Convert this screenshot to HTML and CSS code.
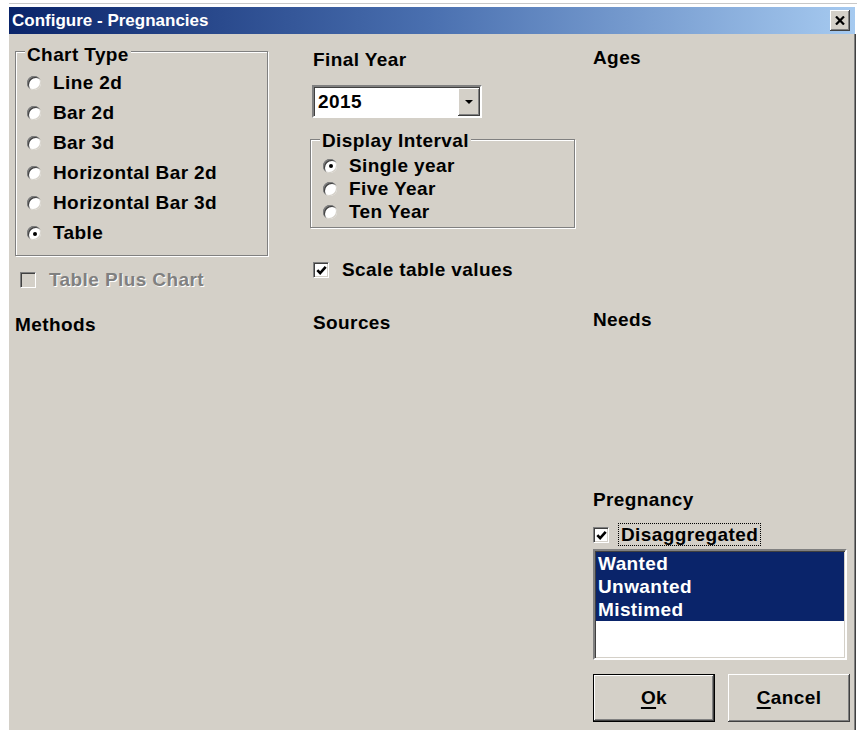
FILE: index.html
```html
<!DOCTYPE html>
<html lang="en">
<head>
<meta charset="utf-8">
<title>Configure - Pregnancies</title>
<link rel="stylesheet" href="styles.css">
</head>
<body>
<div class="window">
  <div class="titlebar">
    <span class="title">Configure - Pregnancies</span>
    <button class="close" type="button" aria-label="Close">
      <svg width="10" height="9" viewBox="0 0 10 9"><path d="M1 0.5 L9 8.5 M9 0.5 L1 8.5" stroke="#000" stroke-width="2.2" fill="none"/></svg>
    </button>
  </div>
  <div class="client">
    <div class="col col-left">
      <div class="group chart-type">
        <div class="group-title">Chart Type</div>
        <div class="radio-row tall"><span class="radio"></span>Line 2d</div>
        <div class="radio-row tall"><span class="radio"></span>Bar 2d</div>
        <div class="radio-row tall"><span class="radio"></span>Bar 3d</div>
        <div class="radio-row tall"><span class="radio"></span>Horizontal Bar 2d</div>
        <div class="radio-row tall"><span class="radio"></span>Horizontal Bar 3d</div>
        <div class="radio-row tall"><span class="radio checked"></span>Table</div>
      </div>
      <div class="check-row disabled table-plus"><span class="check"></span>Table Plus Chart</div>
      <div class="label methods">Methods</div>
    </div>

    <div class="col col-mid">
      <div class="label final-year">Final Year</div>
      <div class="combo">
        <span class="combo-value">2015</span>
        <span class="combo-btn"><svg width="8" height="4" viewBox="0 0 8 4"><path d="M0 0 H8 L4 4 Z" fill="#000"/></svg></span>
      </div>
      <div class="group interval">
        <div class="group-title">Display Interval</div>
        <div class="radio-row short"><span class="radio checked"></span>Single year</div>
        <div class="radio-row short"><span class="radio"></span>Five Year</div>
        <div class="radio-row short"><span class="radio"></span>Ten Year</div>
      </div>
      <div class="check-row scale"><span class="check checked"><svg width="11" height="11" viewBox="0 0 10 10"><path d="M1.2 4.6 L3.8 7.4 L8.8 1.8" stroke="#000" stroke-width="2.4" fill="none"/></svg></span>Scale table values</div>
      <div class="label sources">Sources</div>
    </div>

    <div class="col col-right">
      <div class="label ages">Ages</div>
      <div class="label needs">Needs</div>
      <div class="label pregnancy">Pregnancy</div>
      <div class="check-row disagg"><span class="check checked"><svg width="11" height="11" viewBox="0 0 10 10"><path d="M1.2 4.6 L3.8 7.4 L8.8 1.8" stroke="#000" stroke-width="2.4" fill="none"/></svg></span><span class="focus">Disaggregated</span></div>
      <div class="listbox">
        <div class="item selected">Wanted</div>
        <div class="item selected">Unwanted</div>
        <div class="item selected">Mistimed</div>
      </div>
      <div class="buttons">
        <button class="btn default" type="button"><u>O</u>k</button>
        <button class="btn" type="button"><u>C</u>ancel</button>
      </div>
    </div>
  </div>
</div>
</body>
</html>
```
FILE: styles.css
```css
html, body {
  margin: 0;
  padding: 0;
  background: #fff;
}

body {
  font-family: "Liberation Sans", Arial, sans-serif;
  font-weight: bold;
  font-size: 19px;
  letter-spacing: 0.4px;
  color: #000;
}

/* dialog frame */
.window {
  width: 848px;
  margin: 3px 0 0 9px;
  border-top: 1px solid #c8c8c8;
  padding-top: 3px;
  background: #fff;
}

.titlebar {
  height: 27px;
  margin-right: 2px;
  display: flex;
  align-items: center;
  justify-content: space-between;
  background: linear-gradient(to right, #0a246a 0%, #4a70b0 50%, #a6caf0 100%);
}

.title {
  color: #fff;
  font-size: 17px;
  letter-spacing: 0;
  padding-left: 3px;
}

.close {
  width: 20px;
  height: 21px;
  margin-right: 5px;
  padding: 0;
  border: none;
  background: #d4d0c8;
  box-shadow: inset -1px -1px #404040, inset 1px 1px #fff, inset -2px -2px #808080, inset 2px 2px #d4d0c8;
  display: flex;
  align-items: center;
  justify-content: center;
}

.client {
  height: 696px;
  background: #d4d0c8;
  padding-left: 6px;
  display: grid;
  grid-template-columns: 295px 283px 256px;
  box-shadow: inset -1px 0 #fff, inset -2px 0 #404040, inset -3px 0 #808080;
}

.col {
  display: flex;
  flex-direction: column;
  align-items: flex-start;
}

.label {
  line-height: 22px;
}

/* etched group box */
.group {
  box-sizing: border-box;
  border: 1px solid #808080;
  box-shadow: inset 1px 1px #fff, 1px 1px #fff;
}

.group-title {
  width: fit-content;
  line-height: 22px;
  padding: 0 2px;
  margin-left: 9px;
  margin-bottom: 2px;
  background: #d4d0c8;
}

.chart-type {
  width: 253px;
  margin-top: 17px;
  padding: 0 0 7px 11px;
}
.chart-type .group-title {
  margin-top: -8px;
  margin-left: -2px;
}

.interval {
  width: 265px;
  margin-top: 21px;
  padding: 0 0 4px 12px;
}
.interval .group-title {
  margin-top: -10px;
  margin-left: -3px;
}

/* radio buttons: white disc with a sunken crescent on the upper left */
.radio-row {
  display: flex;
  align-items: center;
}
.radio-row.tall { height: 30px; }
.radio-row.short { height: 23px; }

.radio {
  flex: none;
  width: 14px;
  height: 14px;
  margin-right: 12px;
  border-radius: 50%;
  background: #fff;
  box-shadow: inset 1px 1px 0 #808080, inset 2px 2px 0 #404040, inset -1px -1px 0 #d4d0c8;
  display: flex;
  align-items: center;
  justify-content: center;
}
.radio.checked::after {
  content: "";
  width: 4px;
  height: 4px;
  margin: 1px 0 0 1px;
  border-radius: 50%;
  background: #000;
}

/* check boxes */
.check-row {
  display: flex;
  align-items: center;
  line-height: 22px;
}

.check {
  flex: none;
  box-sizing: border-box;
  width: 16px;
  height: 16px;
  border: 1px solid;
  border-color: #808080 #fff #fff #808080;
  background: #fff;
  box-shadow: inset 1px 1px #404040, inset -1px -1px #d4d0c8;
  display: flex;
  align-items: center;
  justify-content: center;
  padding: 1px 0 0 1px;
}

.disabled {
  color: #808080;
  text-shadow: 1px 1px #fff;
}
.disabled .check {
  background: #d4d0c8;
}

.table-plus {
  margin-top: 13px;
}
.table-plus .check {
  margin: 0 13px 0 5px;
}

.methods {
  margin-top: 23px;
}

/* middle column */
.final-year {
  margin-top: 15px;
  margin-left: 3px;
}

.combo {
  box-sizing: border-box;
  width: 170px;
  height: 33px;
  margin: 14px 0 0 2px;
  border: 2px solid;
  border-color: #808080 #fff #fff #808080;
  box-shadow: inset 1px 1px #404040;
  background: #fff;
  display: flex;
  align-items: stretch;
  justify-content: space-between;
  padding: 1px 0 0 1px;
}

.combo-value {
  line-height: 28px;
  padding-left: 3px;
}

.combo-btn {
  width: 22px;
  background: #d4d0c8;
  box-shadow: inset -1px -1px #404040, inset 1px 1px #fff, inset -2px -2px #808080;
  display: flex;
  align-items: center;
  justify-content: center;
}

.scale {
  margin-top: 31px;
}
.scale .check {
  margin: 0 13px 0 3px;
}

.sources {
  margin-top: 31px;
  margin-left: 3px;
}

/* right column */
.ages {
  margin-top: 13px;
}
.needs {
  margin-top: 240px;
}
.pregnancy {
  margin-top: 158px;
}

.disagg {
  margin-top: 12px;
}
.disagg .check {
  margin-right: 9px;
}
.focus {
  line-height: 21px;
  padding: 0 2px;
  border: 1px dotted #000;
}

.listbox {
  box-sizing: border-box;
  width: 254px;
  height: 111px;
  margin-top: 3px;
  border: 2px solid;
  border-color: #808080 #fff #fff #808080;
  box-shadow: inset 1px 1px #404040, inset -1px -1px #d4d0c8;
  background: #fff;
  padding: 1px 1px 0 1px;
}

.item {
  height: 23px;
  line-height: 23px;
  padding-left: 2px;
}
.item.selected {
  background: #0a246a;
  color: #fff;
}

.buttons {
  display: flex;
  gap: 13px;
  margin-top: 14px;
}

.btn {
  box-sizing: border-box;
  width: 122px;
  height: 48px;
  padding: 0;
  border: none;
  background: #d4d0c8;
  font: inherit;
  letter-spacing: inherit;
  color: #000;
  box-shadow: inset -1px -1px #404040, inset 1px 1px #fff, inset -2px -2px #808080, inset 2px 2px #d4d0c8;
}
.btn.default {
  border: 1px solid #000;
}
.btn u {
  text-decoration-thickness: 2px;
  text-underline-offset: 3px;
}
```
